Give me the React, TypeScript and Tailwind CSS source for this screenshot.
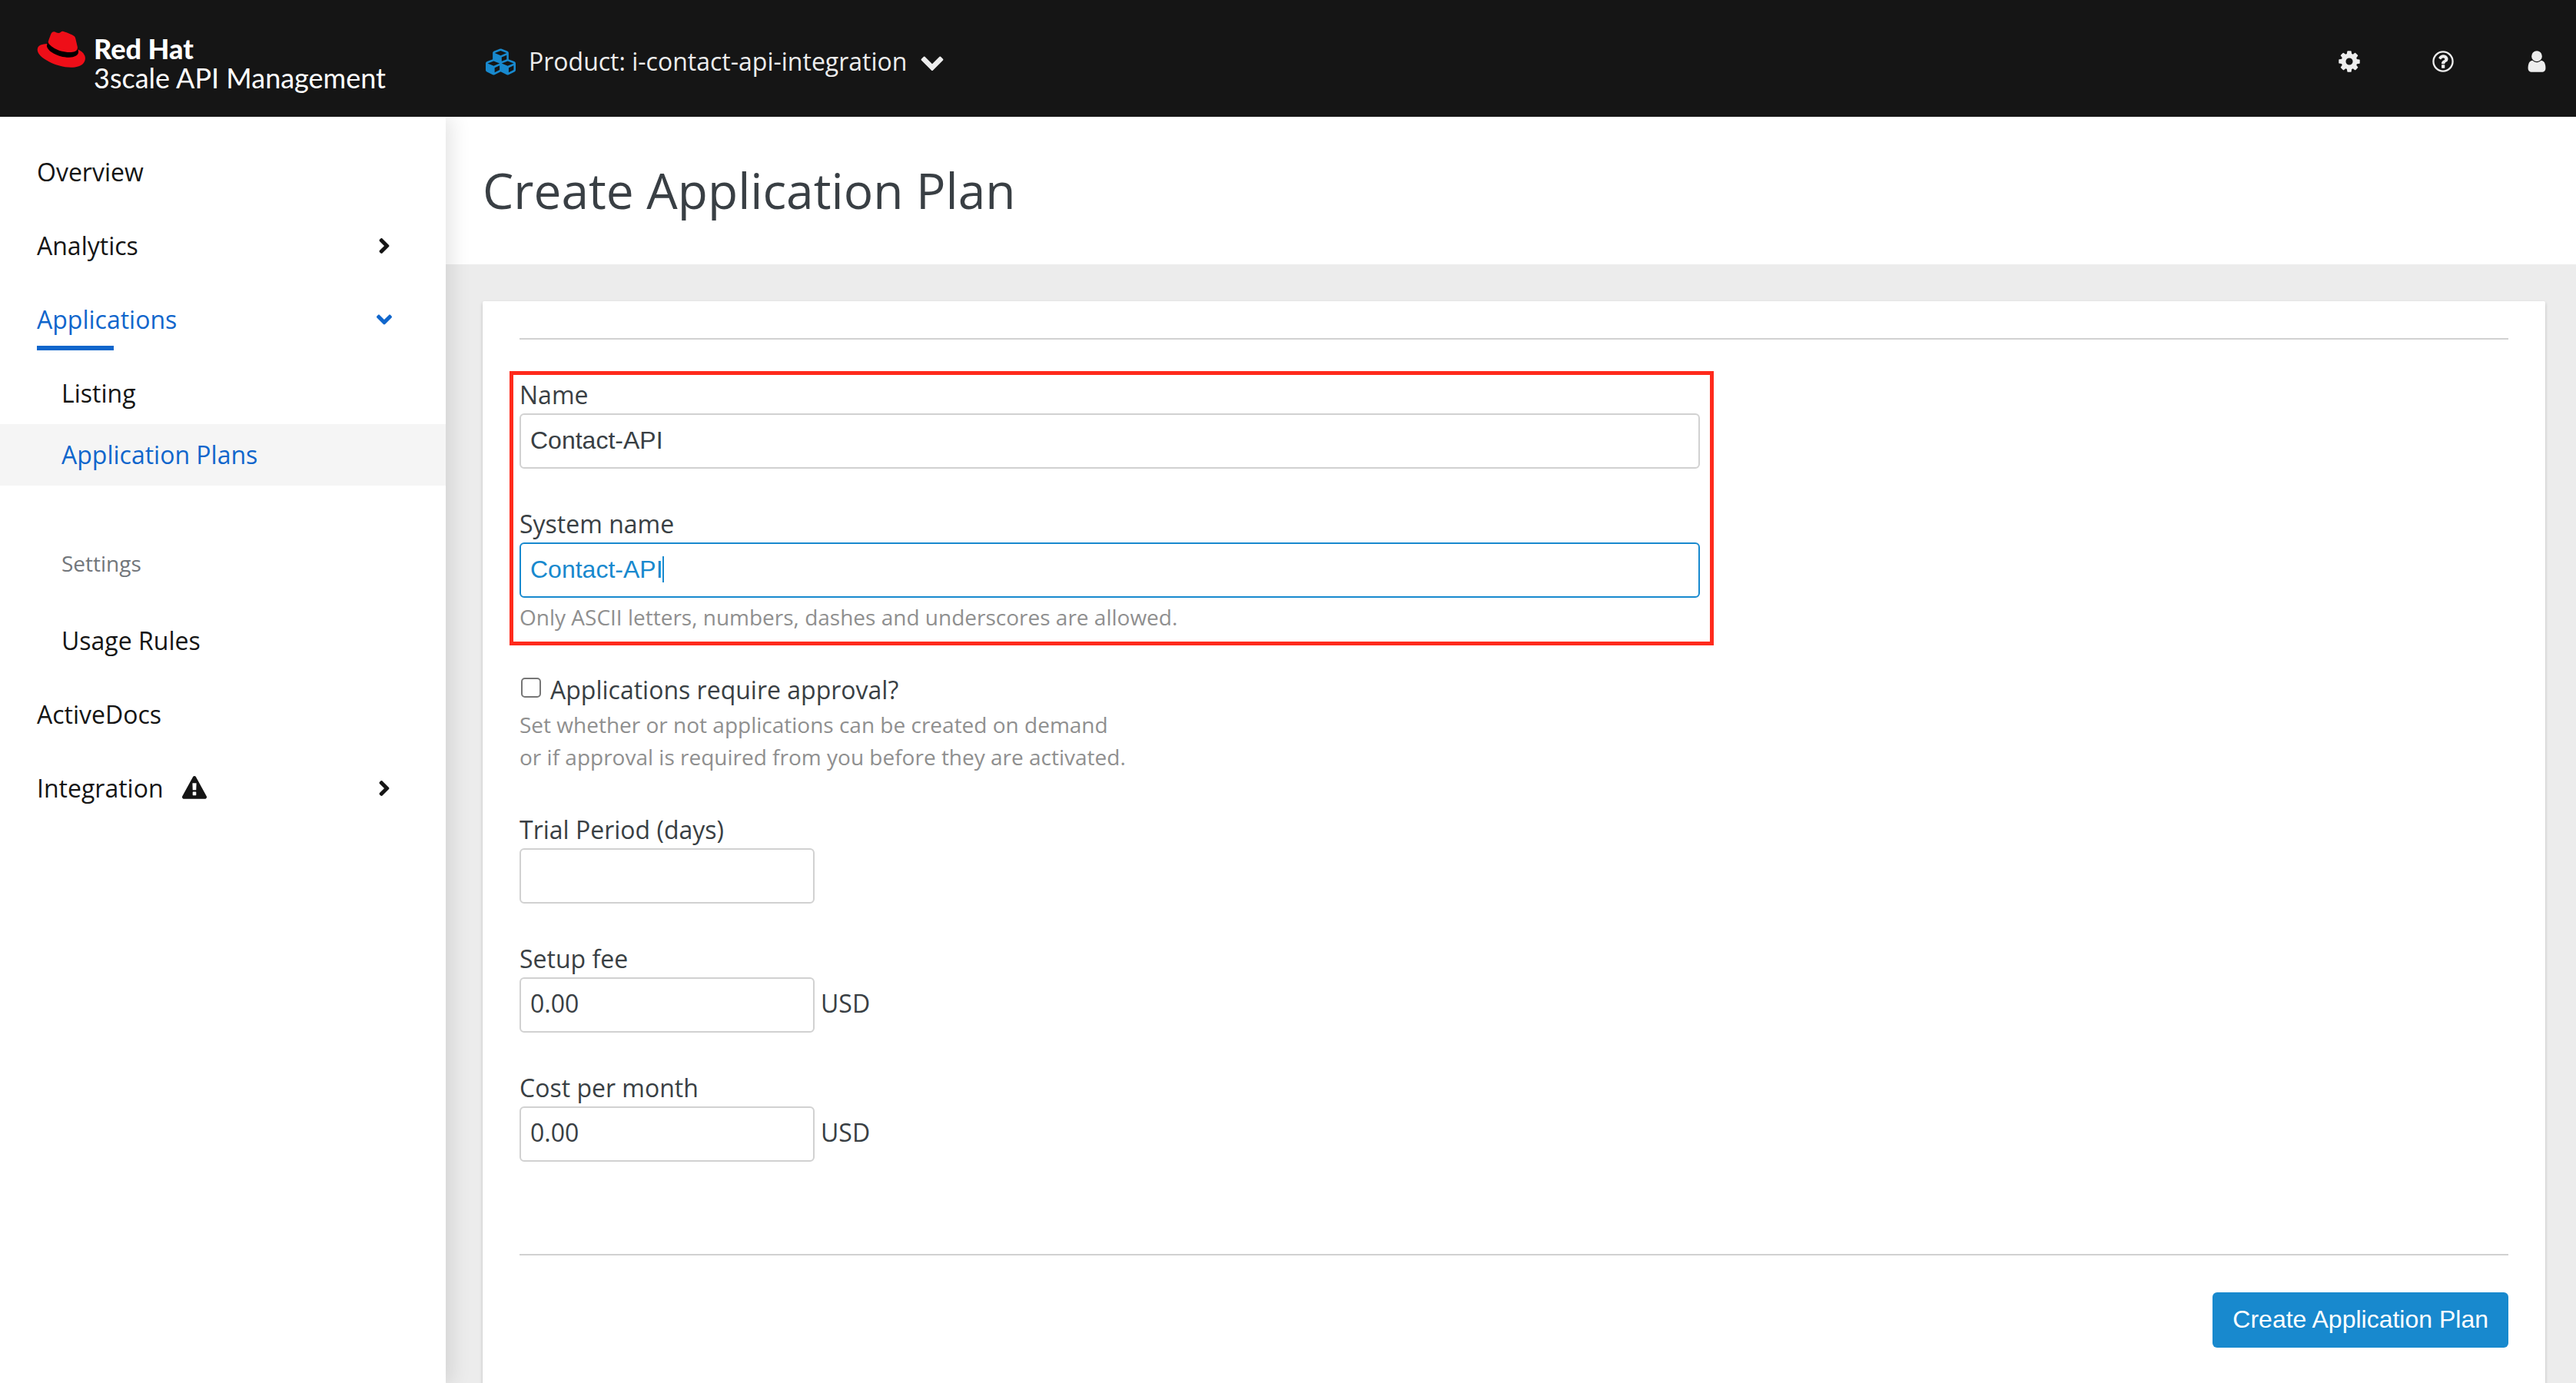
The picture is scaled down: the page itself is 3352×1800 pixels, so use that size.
import React, { useState } from "react";
import { FaAngleDown, FaAngleRight, FaCubes } from "react-icons/fa";

function HatLogo() {
  return (
    <svg viewBox="0 0 192 146" className="h-12 w-16 shrink-0" aria-hidden="true">
      <path
        fill="#ee0e18"
        d="M38 52C22.6 53.2.8 56.2.8 75.2.8 106.5 74.9 145 133.6 145c45 0 56.4-20.4 56.4-36.4 0-12.7-10.9-27-30.7-35.6z"
      />
      <path
        fill="#000"
        d="M161.3 73.4c1.8 8.4 1.8 9.2 1.8 10.3 0 14-15.9 21.7-36.7 21.7-47.1 0-88.4-27.5-88.4-45.7 0-2.8.6-5.2 1.6-7.4l3.8-9 116 21z"
      />
      <path
        fill="#ee0e18"
        d="M129 85c12.5 0 30.6-2.6 30.6-17.5a14 14 0 0 0-.3-3.4l-7.4-32.3c-1.8-7.2-3.3-10.4-15.8-16.6C126.4 10.2 105.3 2 99.1 2c-5.8 0-7.6 7.5-14.8 7.5C77.5 9.5 72.5 3.7 66 3.7c-6 0-9.9 4.1-12.9 12.5 0 0-8.4 23.7-9.5 27.2a6.4 6.4 0 0 0-.2 1.9C43.4 54.5 79.3 85 129 85"
      />
    </svg>
  );
}

function CogIcon() {
  return (
    <svg viewBox="0 0 1792 1792" className="size-8" fill="currentColor" aria-hidden="true">
      <path d="M1152 896q0-106-75-181t-181-75-181 75-75 181 75 181 181 75 181-75 75-181zm512-109v222q0 12-8 23t-20 13l-185 28q-19 54-39 91 35 50 107 138 10 12 10 25t-9 23q-27 37-99 108t-94 71q-12 0-26-9l-138-108q-44 23-91 38-16 136-29 186-7 28-36 28h-222q-14 0-24.5-8.5t-11.5-21.5l-28-184q-49-16-90-37l-141 107q-10 9-25 9-14 0-25-11-126-114-165-168-7-10-7-23 0-12 8-23 15-21 51-66.5t54-70.5q-27-50-41-99l-183-27q-13-2-21-12.5t-8-23.5v-222q0-12 8-23t19-13l186-28q14-46 39-92-40-57-107-138-10-12-10-24 0-10 9-23 26-36 98.5-107.5t94.5-71.5q13 0 26 10l138 107q44-23 91-38 16-136 29-186 7-28 36-28h222q14 0 24.5 8.5t11.5 21.5l28 184q49 16 90 37l142-107q9-9 24-9 13 0 25 10 129 119 165 170 7 8 7 22 0 12-8 23-15 21-51 66.5t-54 70.5q26 50 41 98l183 28q13 2 21 12.5t8 23.5z" />
    </svg>
  );
}

function HelpIcon() {
  return (
    <svg viewBox="0 0 1792 1792" className="size-8" fill="currentColor" aria-hidden="true">
      <circle cx="896" cy="896" r="704" fill="none" stroke="currentColor" strokeWidth="128" />
      <path
        transform="translate(72 45) scale(0.93 0.95)"
        d="M1024 1376v-192q0-14-9-23t-23-9h-192q-14 0-23 9t-9 23v192q0 14 9 23t23 9h192q14 0 23-9t9-23zm256-672q0-88-55.500-163t-138.500-116-170-41q-243 0-371 213-15 24 8 42l132 100q7 6 19 6 16 0 25-12 53-68 86-92 34-24 86-24 48 0 85.500 26t37.500 59q0 38-20 61t-68 45q-63 28-115.500 86.500t-52.500 125.500v36q0 14 9 23t23 9h192q14 0 23-9t9-23q0-19 21.500-49.500t54.500-49.500q32-18 49-28.500t46-35 44.500-48 28-60.500 12.500-81z"
      />
    </svg>
  );
}

function UserIcon() {
  return (
    <svg viewBox="0 0 1792 1792" className="size-8" fill="currentColor" aria-hidden="true">
      <path d="M1536 1399q0 109-62.500 187t-150.500 78h-854q-88 0-150.500-78t-62.500-187q0-85 8.500-160.500t31.500-152 58.500-131 94-89 134.500-34.500q131 128 313 128t313-128q76 0 134.500 34.500t94 89 58.500 131 31.500 152 8.500 160.500zm-256-887q0 159-112.500 271.500t-271.500 112.500-271.500-112.500-112.500-271.500 112.500-271.500 271.500-112.500 271.500 112.500 112.500 271.500z" />
    </svg>
  );
}

function ChevronDownIcon() {
  return (
    <svg viewBox="0 0 1792 1792" className="size-8" fill="currentColor" aria-hidden="true">
      <path d="M1683 808l-742 741q-19 19-45 19t-45-19l-742-741q-19-19-19-45.500t19-45.500l166-165q19-19 45-19t45 19l531 531 531-531q19-19 45-19t45 19l166 165q19 19 19 45.500t-19 45.500z" />
    </svg>
  );
}

function WarningIcon() {
  return (
    <svg viewBox="0 0 1792 1792" className="size-8" fill="currentColor" role="img" aria-label="Warning">
      <path d="M1024 1375v-190q0-14-9.500-23.500t-22.500-9.500h-192q-13 0-22.500 9.500t-9.500 23.500v190q0 14 9.500 23.500t22.500 9.500h192q13 0 22.500-9.500t9.500-23.500zm-2-374l18-459q0-12-10-19-13-11-24-11h-220q-11 0-24 11-10 7-10 21l17 457q0 10 10 16.500t24 6.500h185q14 0 23.500-6.500t10.500-16.500zm-14-934l768 1408q35 63-2 126-17 29-46.500 46t-63.500 17h-1536q-34 0-63.500-17t-46.500-46q-37-63-2-126l768-1408q17-31 47-49t65-18 65 18 47 49z" />
    </svg>
  );
}

function Header() {
  return (
    <header className="relative z-20 flex h-[152px] items-center bg-[#151515] pt-2 text-[#ededed]">
      <a href="#home" className="flex w-[580px] shrink-0 items-start gap-[10px] pl-12 font-['Lato',sans-serif] text-[36px] leading-[38px] text-white">
        <HatLogo />
        <span className="flex flex-col pt-1">
          <span className="font-black">Red Hat</span>
          <span>3scale API Management</span>
        </span>
      </a>
      <button type="button" className="ml-[52px] flex items-center gap-[17px]">
        <FaCubes size={39} className="text-[#1889ce]" aria-hidden="true" />
        <span>Product: i-contact-api-integration</span>
        <ChevronDownIcon />
      </button>
      <div className="ml-auto flex gap-[90px] pr-[35px]">
        <button type="button" aria-label="Settings"><CogIcon /></button>
        <button type="button" aria-label="Help"><HelpIcon /></button>
        <button type="button" aria-label="Account"><UserIcon /></button>
      </div>
    </header>
  );
}

function Sidebar() {
  return (
    <nav className="relative z-10 w-[580px] shrink-0 bg-white pt-6 text-[#151515] shadow-[8px_0_24px_rgba(3,3,3,0.1)]">
      <ul>
        <li><a href="#overview" className="block px-12 py-6">Overview</a></li>
        <li>
          <a href="#analytics" className="flex items-center justify-between py-6 pr-16 pl-12">
            Analytics
            <FaAngleRight size={32} aria-hidden="true" />
          </a>
        </li>
        <li>
          <a href="#applications" className="relative flex items-center justify-between py-6 pr-16 pl-12 text-[#1066cc]">
            Applications
            <FaAngleDown size={32} aria-hidden="true" />
            <span className="absolute bottom-2 left-12 h-[6px] w-[100px] bg-[#1066cc]" />
          </a>
          <ul className="py-2">
            <li><a href="#listing" className="block px-20 py-4">Listing</a></li>
            <li><a href="#plans" className="block bg-[#f5f5f5] px-20 py-4 text-[#1066cc]" aria-current="page">Application Plans</a></li>
          </ul>
          <h2 className="px-20 pt-[72px] pb-10 text-[28px] leading-[42px] text-[#72767b]">Settings</h2>
          <ul className="pb-2">
            <li><a href="#usage-rules" className="block px-20 py-4">Usage Rules</a></li>
          </ul>
        </li>
        <li><a href="#activedocs" className="block px-12 py-6">ActiveDocs</a></li>
        <li>
          <a href="#integration" className="flex items-center justify-between py-6 pr-16 pl-12">
            <span className="flex items-center gap-6">
              Integration
              <WarningIcon />
            </span>
            <FaAngleRight size={32} aria-hidden="true" />
          </a>
        </li>
      </ul>
    </nav>
  );
}

const inputBox = "block h-[72px] rounded-[6px] border-2 bg-white px-3 outline-none";

function MoneyField({ id, label }: { id: string; label: string }) {
  const [value, setValue] = useState("0.00");
  return (
    <div>
      <label htmlFor={id} className="block">{label}</label>
      <div className="flex items-center gap-2">
        <input
          id={id}
          value={value}
          onChange={(e) => setValue(e.target.value)}
          className={`${inputBox} w-96 border-[#d1d1d1] pb-[5px]`}
        />
        <span className="pb-[5px]">USD</span>
      </div>
    </div>
  );
}

function PlanForm() {
  const [name, setName] = useState("Contact-API");
  const [systemName, setSystemName] = useState("Contact-API");
  return (
    <form className="flex-1 rounded-t-[2px] bg-white p-12 text-[#393f44] shadow-[0_2px_4px_rgba(3,3,3,0.2)]" onSubmit={(e) => e.preventDefault()}>
      <hr className="border-t-2 border-[#d1d1d1]" />
      <div className="flex flex-col gap-12 py-12">
        <div className="relative flex w-full max-w-[1536px] flex-col gap-12">
          <div>
            <label htmlFor="name" className="block">Name</label>
            <input
              id="name"
              value={name}
              onChange={(e) => setName(e.target.value)}
              className={`${inputBox} w-full border-[#d1d1d1] pb-[2px] font-['Liberation_Sans',Arial,sans-serif]`}
            />
          </div>
          <div>
            <label htmlFor="system-name" className="block">System name</label>
            <div className="relative">
              <input
                id="system-name"
                value={systemName}
                onChange={(e) => setSystemName(e.target.value)}
                aria-describedby="system-name-hint"
                className={`${inputBox} w-full border-[#1889ce] pb-[2px] font-['Liberation_Sans',Arial,sans-serif] text-[#1889ce]`}
              />
              <span className="pointer-events-none absolute top-[18px] left-[186px] h-[34px] w-[2px] bg-[#1889ce]" />
            </div>
            <p id="system-name-hint" className="mt-1 text-[28px] leading-[42px] text-[#8f8f8f]">
              Only ASCII letters, numbers, dashes and underscores are allowed.
            </p>
          </div>
          <div className="pointer-events-none absolute -top-[7px] -right-[18px] -bottom-4 -left-[13px] border-[5px] border-[#ff2a1c]" />
        </div>
        <div>
          <div className="flex h-[50px] items-start gap-3 pt-[2px]">
            <input
              id="approval"
              type="checkbox"
              aria-describedby="approval-hint"
              className="mt-2 ml-[2px] size-[26px] appearance-none rounded-[5px] border-2 border-[#767676] bg-white checked:bg-[#1889ce]"
            />
            <label htmlFor="approval">Applications require approval?</label>
          </div>
          <p id="approval-hint" className="pb-[2px] text-[28px] leading-[42px] text-[#8f8f8f]">
            Set whether or not applications can be created on demand
            <br />
            or if approval is required from you before they are activated.
          </p>
        </div>
        <div>
          <label htmlFor="trial" className="block">Trial Period (days)</label>
          <input id="trial" className={`${inputBox} w-96 border-[#d1d1d1]`} />
        </div>
        <MoneyField id="setup-fee" label="Setup fee" />
        <MoneyField id="monthly-cost" label="Cost per month" />
      </div>
      <hr className="mt-[72px] border-t-2 border-[#d1d1d1]" />
      <div className="flex justify-end pt-12">
        <button type="submit" className="h-[72px] rounded-[6px] bg-[#1889ce] px-[26px] pb-[2px] font-['Liberation_Sans',Arial,sans-serif] text-white">
          Create Application Plan
        </button>
      </div>
    </form>
  );
}

export default function App() {
  return (
    <div className="flex min-h-screen flex-col bg-[#ececec] font-['Open_Sans',sans-serif] text-[32px] leading-[48px]">
      <Header />
      <div className="flex flex-1">
        <Sidebar />
        <main className="flex min-w-0 flex-1 flex-col">
          <div className="bg-white px-12 py-12">
            <h1 className="text-[64px] leading-[96px] text-[#393f44]">Create Application Plan</h1>
          </div>
          <div className="flex flex-1 flex-col pt-12 pr-10 pl-12">
            <PlanForm />
          </div>
        </main>
      </div>
    </div>
  );
}
